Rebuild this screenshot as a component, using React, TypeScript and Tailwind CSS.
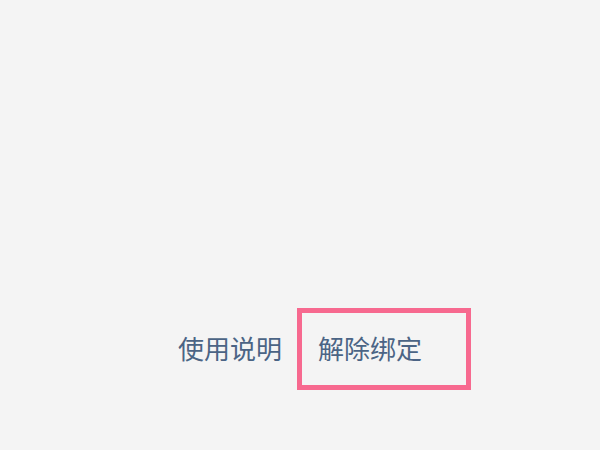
export default function App() {
  return (
    <div
      className="w-[600px] h-[450px] bg-[#f4f4f4] flex flex-col justify-end pb-[60px]"
      style={{ fontFamily: '"Noto Sans CJK SC", "Noto Sans", sans-serif' }}
    >
      <div className="flex items-center pl-[178px]">
        <span className="text-[26px] leading-none text-[#4b6485] w-[119px] -mt-[3px]">使用说明</span>
        <div className="w-[174px] h-[82px] border-[5px] border-[#f7698f] flex items-center pl-[16px]">
          <span className="text-[26px] leading-none text-[#4b6485] -mt-[3px]">解除绑定</span>
        </div>
      </div>
    </div>
  );
}
